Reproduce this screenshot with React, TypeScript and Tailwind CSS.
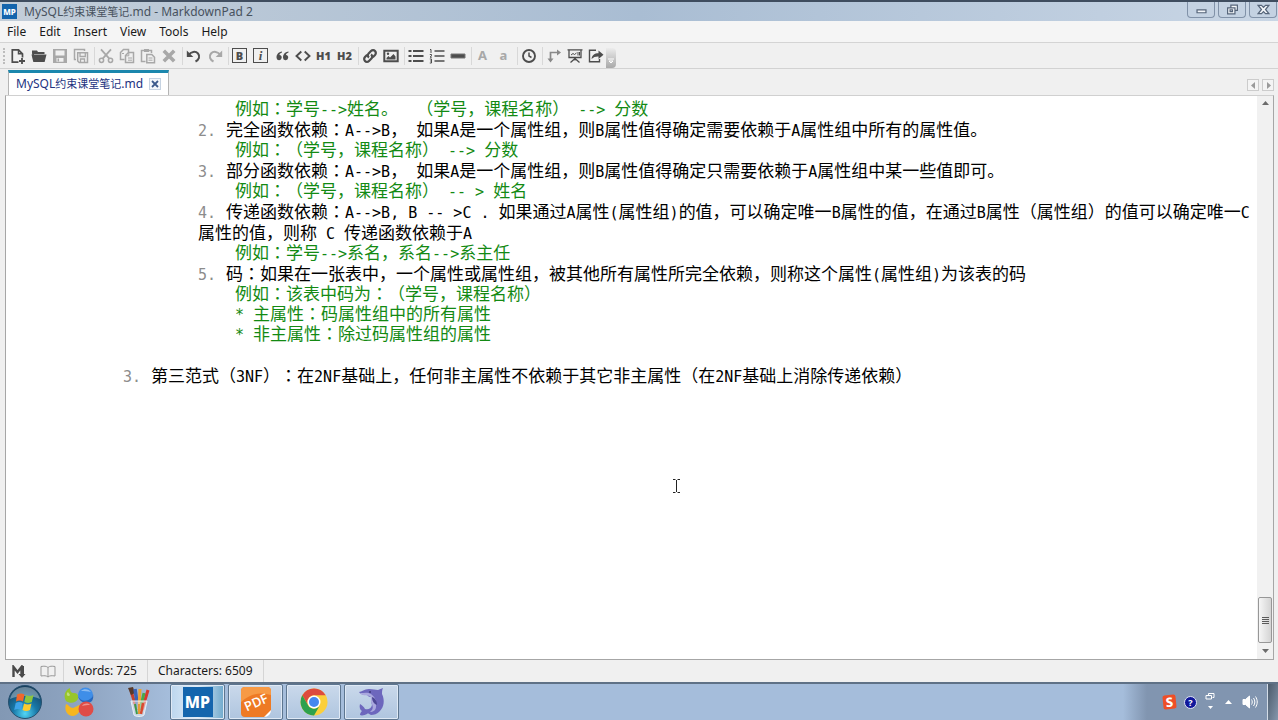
import type { ReactNode } from "react";
import clsx from "clsx";

const DARK = "#4d4d4d";
const DIM = "#a8a8a8";

const Svg = ({ children, size = 16 }: { children: ReactNode; size?: number }) => (
  <svg
    width={size}
    height={size}
    viewBox="0 0 16 16"
    fill="none"
    stroke="currentColor"
    strokeWidth="1.5"
    aria-hidden="true"
  >
    {children}
  </svg>
);

type Tool = { label: string; off?: boolean; icon: ReactNode };

const toolGroups: Tool[][] = [
  [
    {
      label: "New",
      icon: (
        <Svg>
          <path d="M8.5 14.2H2.3V1.8h6.2l4 4v3.7" strokeWidth="1.7" />
          <path d="M8.5 1.8v4h4" />
          <path d="M12 10v6M9 13h6" strokeWidth="1.8" />
        </Svg>
      ),
    },
    {
      label: "Open",
      icon: (
        <Svg>
          <path d="M1 5V2.5h5l1 1.5h6.5V6H3.2L1.8 10z" fill="currentColor" stroke="none" />
          <path d="M.5 6.5h15L13.6 14H2.3z" fill="currentColor" stroke="none" />
        </Svg>
      ),
    },
    {
      label: "Save",
      off: true,
      icon: (
        <Svg>
          <path
            d="M1 1h14v14H1zM3.5 2.5v5h9v-5zM4.5 10v3.8h7V10z"
            fill="currentColor"
            fillRule="evenodd"
            stroke="none"
          />
          <path d="M6.3 10.5v3" />
        </Svg>
      ),
    },
    {
      label: "Save All",
      off: true,
      icon: (
        <Svg>
          <path d="M3 11.5H1.5v-10h10V3" />
          <path d="M4.7 4.7h9.8v9.8H6.2l-1.5-1.5z" />
          <path d="M7 5v3.5h5.3V5M7.5 14v-3h4v3" strokeWidth="1.3" />
        </Svg>
      ),
    },
  ],
  [
    {
      label: "Cut",
      off: true,
      icon: (
        <Svg>
          <circle cx="3.5" cy="12.3" r="2.1" />
          <circle cx="12.5" cy="12.3" r="2.1" />
          <path d="M3 1.3l8.3 9.3M13 1.3L4.7 10.6" strokeWidth="1.8" />
        </Svg>
      ),
    },
    {
      label: "Copy",
      off: true,
      icon: (
        <Svg>
          <path d="M5.5 11.5h-4v-7l3-3h5v2.5" />
          <path d="M6.5 14.5v-7l3-3h5v10z" />
          <path d="M9.8 4.5v3.3H6.5M9 10h4M9 12.2h4M3 5.5h2" strokeWidth="1" />
        </Svg>
      ),
    },
    {
      label: "Paste",
      off: true,
      icon: (
        <Svg>
          <path d="M5.5 13.5h-4v-11h10V5" />
          <path d="M4 2.5h5" strokeWidth="3" />
          <path d="M6.8 14.8V6.5h5l2.7 2.7v5.6z" />
          <path d="M8.5 10h4M8.5 12.2h4" strokeWidth="1" />
        </Svg>
      ),
    },
    {
      label: "Delete",
      off: true,
      icon: (
        <Svg>
          <path d="M2.8 2.8l10.4 10.4M13.2 2.8L2.8 13.2" strokeWidth="3.6" />
        </Svg>
      ),
    },
  ],
  [
    {
      label: "Undo",
      icon: (
        <Svg>
          <path d="M2.5 7C5 3.5 9.5 2.8 12 5.5c2.4 2.8 1 6.3-2.5 8" strokeWidth="2" />
          <path d="M.8 2.5V9h6.5z" fill="currentColor" stroke="none" />
        </Svg>
      ),
    },
    {
      label: "Redo",
      off: true,
      icon: (
        <Svg>
          <path d="M13.5 7C11 3.5 6.5 2.8 4 5.5c-2.4 2.8-1 6.3 2.5 8" strokeWidth="2" />
          <path d="M15.2 2.5V9H8.7z" fill="currentColor" stroke="none" />
        </Svg>
      ),
    },
  ],
  [
    {
      label: "Bold",
      icon: (
        <span className="flex size-[15px] items-center justify-center border border-[#4d4d4d] text-[11px] leading-none font-black">
          B
        </span>
      ),
    },
    {
      label: "Italic",
      icon: (
        <span className="flex size-[15px] items-center justify-center border border-[#4d4d4d] font-['Liberation_Serif',serif] text-[13px] leading-none font-bold italic">
          i
        </span>
      ),
    },
    {
      label: "Quote",
      icon: (
        <Svg>
          <path
            d="M8 3.500C5.500 3.800 2.500 5.500 2.500 9.500a2.600 2.600 0 1 0 3-2.500C5.600 5.700 6.500 4.900 8 4.500zM14.500 3.500c-2.500.3-5.500 2-5.500 6a2.600 2.600 0 1 0 3-2.500c.1-1.300 1-2.100 2.500-2.500z"
            fill="currentColor"
            stroke="none"
          />
        </Svg>
      ),
    },
    {
      label: "Code",
      icon: (
        <Svg>
          <path d="M6.3 3.5L1.5 8l4.8 4.500M9.700 3.500L14.500 8l-4.800 4.500" strokeWidth="1.9" />
        </Svg>
      ),
    },
    { label: "Heading 1", icon: <span className="text-[11px] leading-none font-black">H1</span> },
    { label: "Heading 2", icon: <span className="text-[11px] leading-none font-black">H2</span> },
  ],
  [
    {
      label: "Hyperlink",
      icon: (
        <Svg>
          <path
            d="M7 9.500c-1.500-1-1.500-2.800-.4-4L9 3c1.200-1.200 3-1.200 4 0s1 2.800 0 4l-2.200 2.200M9 6.500c1.500 1 1.500 2.800.4 4L7 13c-1.200 1.200-3 1.200-4 0s-1-2.800 0-4l2.200-2.200"
            strokeWidth="2.2"
          />
        </Svg>
      ),
    },
    {
      label: "Image",
      icon: (
        <Svg>
          <path d="M1.3 2.8h13.4v10.4H1.3z" strokeWidth="2" />
          <path d="M3.5 11.5V10l2-2L7 9.500 10.500 6l2 2.500v3z" fill="currentColor" stroke="none" />
          <circle cx="5" cy="5.8" r="1.2" fill="currentColor" stroke="none" />
        </Svg>
      ),
    },
  ],
  [
    {
      label: "Bulleted List",
      icon: (
        <Svg>
          <path d="M.5 3h3M.5 8h3M.5 13h3M5 3h10.500M5 8h10.500M5 13h10.500" strokeWidth="2.2" />
        </Svg>
      ),
    },
    {
      label: "Numbered List",
      icon: (
        <Svg>
          <path d="M5.5 3h10M5.5 8h10M5.5 13h10" />
          <path d="M1 1.500h1V5M.8 6.500h1.700v1.300L1 9.200h1.800M.8 11h1.700v4H.8M1.200 13h1.300" strokeWidth="1" />
        </Svg>
      ),
    },
    {
      label: "Horizontal Rule",
      icon: (
        <Svg>
          <path d="M1 6h14v4H1z" fill="currentColor" stroke="#777777" strokeWidth="1" />
        </Svg>
      ),
    },
  ],
  [
    { label: "Uppercase", off: true, icon: <span className="text-[13px] leading-none font-bold">A</span> },
    { label: "Lowercase", off: true, icon: <span className="text-[13px] leading-none font-bold">a</span> },
  ],
  [
    {
      label: "Timestamp",
      icon: (
        <Svg>
          <circle cx="8" cy="8" r="6" strokeWidth="1.9" />
          <path d="M8 4.5V8l2.500 1.500" />
        </Svg>
      ),
    },
  ],
  [
    {
      label: "Sync Scrolling",
      icon: (
        <Svg>
          <path d="M4.5 11V4.500h7" stroke="#888888" strokeWidth="1.7" />
          <path d="M1.5 10.500h6l-3 4zM11 1.500v6l4-3z" fill="#888888" stroke="none" />
        </Svg>
      ),
    },
    {
      label: "Preview",
      icon: (
        <Svg>
          <path d="M.5 1.800h15M2 2v7.500h12V2M8 9.500v3M8 10.500l-4.500 4M8 10.500l4.500 4" strokeWidth="1.3" />
          <path d="M4 7l2-1.500 1.500 1L9.500 5M11 4v3.500M12.500 4v3.500" strokeWidth="1" />
        </Svg>
      ),
    },
    {
      label: "Export",
      icon: (
        <Svg>
          <path d="M8 2.300H1.500v11.400h10V11" strokeWidth="1.4" />
          <path
            d="M3.500 11c.5-4 3-5.800 7-5.800V2.500l5 4.300-5 4.200V8.400c-3-.1-5 .6-7 2.600z"
            fill="currentColor"
            stroke="none"
          />
        </Svg>
      ),
    },
  ],
];

type Line = { kind: "item" | "example" | "blank"; num?: string; outer?: boolean; text?: string };

const lines: Line[] = [
  { kind: "example", text: "例如：学号-->姓名。  （学号，课程名称） --> 分数" },
  { kind: "item", num: "2.", text: "完全函数依赖：A-->B， 如果A是一个属性组，则B属性值得确定需要依赖于A属性组中所有的属性值。" },
  { kind: "example", text: "例如：（学号，课程名称） --> 分数" },
  { kind: "item", num: "3.", text: "部分函数依赖：A-->B， 如果A是一个属性组，则B属性值得确定只需要依赖于A属性组中某一些值即可。" },
  { kind: "example", text: "例如：（学号，课程名称） -- > 姓名" },
  {
    kind: "item",
    num: "4.",
    text: "传递函数依赖：A-->B, B -- >C . 如果通过A属性(属性组)的值，可以确定唯一B属性的值，在通过B属性（属性组）的值可以确定唯一C属性的值，则称 C 传递函数依赖于A",
  },
  { kind: "example", text: "例如：学号-->系名，系名-->系主任" },
  { kind: "item", num: "5.", text: "码：如果在一张表中，一个属性或属性组，被其他所有属性所完全依赖，则称这个属性(属性组)为该表的码" },
  { kind: "example", text: "例如：该表中码为：（学号，课程名称）" },
  { kind: "example", text: "* 主属性：码属性组中的所有属性" },
  { kind: "example", text: "* 非主属性：除过码属性组的属性" },
  { kind: "blank" },
  { kind: "item", num: "3.", outer: true, text: "第三范式（3NF）：在2NF基础上，任何非主属性不依赖于其它非主属性（在2NF基础上消除传递依赖）" },
];

const Latin = ({ children }: { children: ReactNode }) => (
  <span className="font-['DejaVu_Sans_Mono',monospace] text-[15px] leading-none">{children}</span>
);

// Latin runs are set in the code font, the wide colon in the face that centres it
const Mixed = ({ text }: { text: string }) => (
  <>
    {text.split(/([\x20-\x7e]+|：)/).map((part, i) => {
      if (part === "：") {
        return (
          <span key={i} className="font-['Liberation_Mono','Noto_Sans_CJK_JP',sans-serif]">
            {part}
          </span>
        );
      }
      return i % 2 ? <Latin key={i}>{part}</Latin> : part;
    })}
  </>
);

const EditorLine = ({ line }: { line: Line }) => {
  if (line.kind === "blank") return <p className="h-[21px]" />;
  if (line.kind === "example") {
    return (
      <p className="pl-[229px] leading-5 text-[#138a13]">
        <Mixed text={line.text!} />
      </p>
    );
  }
  return (
    <p className={clsx("leading-[21px] text-black", line.outer ? "pl-[117px]" : "pl-48")}>
      <span className="inline-block w-7 text-[#8c8c8c]">
        <Latin>{line.num}</Latin>
      </span>
      <Mixed text={line.text!} />
    </p>
  );
};

const FileName = () => (
  <>
    MySQL<span className="text-[11px]">约束课堂笔记</span>.md
  </>
);

const MpLogo = ({ className }: { className: string }) => (
  <span className={clsx("flex items-center justify-center bg-[#1465ad] font-extrabold text-white", className)}>
    MP
  </span>
);

const TitleBar = () => (
  <header className="flex h-[21px] items-center border-t-2 border-[#3f4d5f] bg-linear-to-r from-[#c3ced9] via-[#a9bdd3] to-[#c9d6e5] pl-0.5">
    <MpLogo className="h-[15px] w-[15px] text-[8px] leading-none" />
    <h1 className="ml-[7px] text-[12px] leading-4 text-[#48525e]">
      <FileName /> - MarkdownPad 2
    </h1>
    <div className="ml-auto flex gap-[3px] self-start pr-px text-[#56657a]">
      {[
        { label: "Minimize", d: "M2.5 8.500h11v3.500h-11z" },
        { label: "Restore", d: "M6 5.500V2.500h8v6.500h-3M2 6h9v7.500H2zM5 8.500h3v2H5z" },
        { label: "Close", d: "M1.5 3h4L8 5.500 10.500 3h4l-4 5 4 5h-4L8 10.500 5.500 13h-4l4-5z" },
      ].map((b) => (
        <button
          key={b.label}
          aria-label={b.label}
          className="flex h-4 w-7 items-center justify-center rounded-b-sm border border-t-0 border-[#8192a8] bg-[#c4d2e2]"
        >
          <svg width="13" height="13" viewBox="0 0 16 16" fill="#f4f7fa" stroke="currentColor" strokeWidth="1.5">
            <path d={b.d} />
          </svg>
        </button>
      ))}
    </div>
  </header>
);

const MenuBar = () => (
  <nav className="flex h-[22px] items-center gap-[13px] border-b border-[#d4d4d4] bg-[#f5f5f5] pl-[7px]">
    {["File", "Edit", "Insert", "View", "Tools", "Help"].map((m) => (
      <button key={m} className="text-[12px] leading-4 text-[#1a1a1a]">
        {m}
      </button>
    ))}
  </nav>
);

const Toolbar = () => (
  <div role="toolbar" className="flex h-[26px] items-center border-b border-[#d2d2d2] bg-[#f0f0f0] pl-[3px]">
    <span className="h-4 w-1 border-l-2 border-dotted border-[#bdbdbd]" />
    {toolGroups.map((group, g) => (
      <div key={g} className={clsx("flex items-center", g > 0 && "ml-[3px] border-l border-[#d8d8d8]")}>
        {group.map((t) => (
          <button
            key={t.label}
            aria-label={t.label}
            disabled={t.off}
            style={{ color: t.off ? DIM : DARK }}
            className="flex h-[18px] w-[21px] items-center justify-center"
          >
            {t.icon}
          </button>
        ))}
      </div>
    ))}
    <button
      aria-label="Toolbar options"
      className="flex h-5 w-2.5 items-end justify-center self-end rounded-r bg-linear-to-b from-[#ececec] to-[#a9a9a9] pb-1"
    >
      <svg width="8" height="6" viewBox="0 0 8 6" fill="none" stroke="#ffffff">
        <path d="M1 1h6M2 3l2 2 2-2z" />
      </svg>
    </button>
  </div>
);

const TabStrip = () => (
  <div className="flex h-[26px] shrink-0 items-end justify-between bg-[#f0f0f0] pr-1 pl-2">
    <div className="flex h-[25px] items-center gap-[6px] border-x border-t-[3px] border-x-[#b5b5b5] border-t-[#1b87ad] bg-white px-[7px]">
      <span className="text-[12px] leading-4 text-[#23337f]">
        <FileName />
      </span>
      <button
        aria-label="Close tab"
        className="flex size-[12px] items-center justify-center border border-[#c6d3e2] bg-[#f3f7fb]"
      >
        <svg width="8" height="8" viewBox="0 0 8 8" stroke="#3c5a8c" strokeWidth="1.8">
          <path d="M1 1l6 6M7 1L1 7" />
        </svg>
      </button>
    </div>
    <div className="flex gap-[3px] pb-1">
      {[
        { label: "Scroll tabs left", d: "M6 1v7L2 4.500z" },
        { label: "Scroll tabs right", d: "M3 1v7l4-3.500z" },
      ].map((b) => (
        <button
          key={b.label}
          aria-label={b.label}
          className="flex size-3 items-center justify-center border border-[#cccccc] bg-[#f4f4f4]"
        >
          <svg width="9" height="9" viewBox="0 0 9 9" fill="#9a9a9a">
            <path d={b.d} />
          </svg>
        </button>
      ))}
    </div>
  </div>
);

const ScrollBar = () => (
  <div className="flex w-4 shrink-0 flex-col items-center bg-[#f1f1f1]">
    <button aria-label="Scroll up" className="flex h-[14px] items-center">
      <svg width="7" height="4" viewBox="0 0 7 4" fill="#6b6b6b">
        <path d="M0 4l3.500-4L7 4z" />
      </svg>
    </button>
    <div className="mt-auto flex h-[46px] w-[14px] flex-col items-center justify-center gap-px rounded-xs border border-[#979797] bg-linear-to-r from-[#f6f6f6] to-[#d4d4d4]">
      <i className="h-px w-[7px] bg-[#5a5a5a]" />
      <i className="h-px w-[7px] bg-[#5a5a5a]" />
      <i className="h-px w-[7px] bg-[#5a5a5a]" />
      <i className="h-px w-[7px] bg-[#5a5a5a]" />
    </div>
    <button aria-label="Scroll down" className="flex h-4 items-center">
      <svg width="7" height="4" viewBox="0 0 7 4" fill="#6b6b6b">
        <path d="M0 0h7L3.500 4z" />
      </svg>
    </button>
  </div>
);

const Editor = () => (
  <main className="mr-1 ml-[5px] flex flex-1 border border-[#a6a6a6] border-t-[#d0d0d0] bg-white">
    <div
      role="textbox"
      aria-multiline="true"
      aria-label="Markdown source"
      tabIndex={0}
      className="relative flex-1 cursor-text pt-[5px] font-['Liberation_Mono','Noto_Sans_CJK_SC',sans-serif] text-[17px] break-all whitespace-pre-wrap outline-none [text-spacing-trim:space-all]"
    >
      {lines.map((line, i) => (
        <EditorLine key={i} line={line} />
      ))}
      {/* mouse pointer */}
      <svg
        className="absolute top-[382px] left-[666px]"
        width="9"
        height="16"
        viewBox="0 0 9 16"
        stroke="#222222"
        fill="none"
      >
        <path d="M1 1.500h2.500M5.500 1.500H8M4.500 2v12M1 14.500h2.500M5.500 14.500H8" />
      </svg>
    </div>
    <ScrollBar />
  </main>
);

const StatusBar = () => (
  <footer className="flex h-[22px] items-center bg-[#f0f0f0] pl-3 text-[12px] leading-4 text-[#1a1a1a]">
    <svg width="14" height="13" viewBox="0 0 14 13" fill="none" stroke="#4a4a4a" strokeWidth="2.4" aria-hidden="true">
      <path d="M1.500 12V2l4 5 4-5v8" />
      <path d="M6.500 9h7l-3.500 4z" fill="#4a4a4a" stroke="none" />
      <path d="M11 1v9" strokeWidth="2" />
    </svg>
    <svg className="ml-[14px]" width="16" height="13" viewBox="0 0 16 13" fill="none" stroke="#999999" aria-hidden="true">
      <path d="M8 2.500C6.500 1 4 1 1 1.500V11c3-.5 5.500-.5 7 1 1.500-1.500 4-1.500 7-1V1.500C12 1 9.500 1 8 2.500zM8 2.500V12" />
    </svg>
    <span className="ml-[7px] flex h-full items-center border-l border-[#d5d5d5] px-[10px]">Words: 725</span>
    <span className="flex h-full items-center border-x border-[#d5d5d5] px-[10px]">Characters: 6509</span>
  </footer>
);

const StartOrb = () => (
  <svg width="36" height="36" viewBox="0 0 36 36" aria-hidden="true">
    <defs>
      <radialGradient id="orb" cx="50%" cy="85%" r="80%">
        <stop offset="0" stopColor="#52d6f5" />
        <stop offset="0.45" stopColor="#1878a8" />
        <stop offset="1" stopColor="#17405f" />
      </radialGradient>
    </defs>
    <circle cx="18" cy="18" r="16.5" fill="url(#orb)" stroke="#27506e" />
    <path d="M3 15C5 7 11 3 18 3s13 4 15 12c-8-4-22-4-30 0z" fill="#ffffff" opacity="0.35" />
    <path d="M10 10.500c2.500-1.300 5-1.300 7.500 0l-1.500 7c-2.500-1.300-4.500-1.200-7 0z" fill="#f0682c" />
    <path d="M18.800 11c2.500 1.200 5 1.200 7.700 0l-1.700 7c-2.500 1.200-5 1.200-7.500 0z" fill="#8cc63f" />
    <path d="M8.700 19c2.500-1.200 4.700-1.200 7 0l-1.500 7c-2.300-1.200-4.500-1.200-7 0z" fill="#3ea3e8" />
    <path d="M17 19.500c2.500 1.200 5 1.200 7.500 0L23 26c-2.500 1.300-5 1.300-7.500 0z" fill="#fccb2e" />
  </svg>
);

const SwirlIcon = () => (
  <svg width="30" height="30" viewBox="0 0 30 30" aria-hidden="true">
    <path d="M6 1C1 3-1 9 2 14c4 3 10 2 12-2C15 8 13 6 10 6 7 6 6 4 6 1z" fill="#98c62a" />
    <circle cx="21.5" cy="8" r="7.5" fill="#3f8ee8" />
    <path d="M14 9c2 5 8 6 12 3 2-1 3-3 3-5 1 5-1 9-6 9-5 0-8-3-9-7z" fill="#2668bf" />
    <path d="M2 17c3 1 4 4 7 4 3-1 5-3 7-3 1 4-1 10-7 11-6 0-9-6-7-12z" fill="#f6b61e" />
    <circle cx="22" cy="22" r="7.5" fill="#df4c47" />
    <path d="M3 6c1-2 2 0 3 2-1 2-4 1-3-2zM17 4c3-3 8-2 10 1-3-1-7-1-10-1zM18 19c2-3 6-3 8-1-3 0-5 0-8 1z" fill="#ffffff" opacity="0.4" />
  </svg>
);

const PensIcon = () => (
  <svg width="22" height="30" viewBox="0 0 22 30" aria-hidden="true">
    <path d="M3 4l6 19" stroke="#c6402d" strokeWidth="3" />
    <path d="M0 1l5-1 2 6-4 2z" fill="#5a3a2a" />
    <path d="M7 2l3 20" stroke="#3a62b5" strokeWidth="3.5" />
    <path d="M12 2l-1 20" stroke="#eda232" strokeWidth="3" />
    <path d="M20 3l-6 20" stroke="#d8392c" strokeWidth="3" />
    <path d="M16 6l-4 17" stroke="#4ba847" strokeWidth="3" />
    <path d="M3 14h16l-3 14c-2 2-8 2-10 0z" fill="#ffffff" fillOpacity="0.45" stroke="#e9eff5" />
    <path d="M7 17l2 10" stroke="#3f9a4a" strokeWidth="2" />
    <path d="M15 16l-2 11" stroke="#d84a30" strokeWidth="2.5" />
    <path d="M11 17v10" stroke="#e99a35" strokeWidth="2" />
  </svg>
);

const PdfIcon = () => (
  <svg width="30" height="30" viewBox="0 0 30 30" aria-hidden="true">
    <path d="M4 0h22a4 4 0 0 1 4 4v20l-6 6H4a4 4 0 0 1-4-4V4a4 4 0 0 1 4-4z" fill="#ee7a24" />
    <path d="M0 15C10 6 20 5 30 8V4a4 4 0 0 0-4-4H4a4 4 0 0 0-4 4z" fill="#f79a45" />
    <path d="M30 23l-7 7c4 0 7-3 7-7z" fill="#ffffff" />
    <text
      x="15"
      y="20"
      textAnchor="middle"
      transform="rotate(-24 15 15)"
      fill="#ffffff"
      fontFamily="Open Sans, sans-serif"
      fontWeight="600"
      fontSize="13"
    >
      PDF
    </text>
  </svg>
);

const ChromeIcon = () => (
  <svg width="28" height="28" viewBox="0 0 28 28" aria-hidden="true">
    <circle cx="14" cy="14" r="13.5" fill="#fbcf3b" />
    <path d="M2.300 7.300A13.500 13.500 0 0 1 25.700 7.300H14a6.700 6.700 0 0 0-5.800 10z" fill="#dd4b3e" />
    <path d="M2.300 7.300A13.500 13.500 0 0 0 14 27.500l5.800-10.100a6.700 6.700 0 0 1-11.600 0z" fill="#2da14d" />
    <circle cx="14" cy="14" r="6.5" fill="#ffffff" />
    <circle cx="14" cy="14" r="5" fill="#4587ee" />
  </svg>
);

const DolphinIcon = () => (
  <svg width="28" height="30" viewBox="0 0 28 30" aria-hidden="true">
    <path
      d="M1 5c3 0 5-3 10-3 4 0 6 1 9 1l5-2c-1 2-1 4-1 6 3 6 2 13-2 17-3 3-6 4-9 4-2-1-3-2-4-1-2 1-5 2-7 1 0-2 1-3 2-4-2-1-3-4-2-7 2 1 4 3 5 5 3 1 6 0 7-4-1-3-1-5-1-8-2 0-4-1-4-3C6 8 3 8 1 5z"
      fill="#6d67bd"
    />
    <path d="M2 6c4 0 8-1 11 1 4 3 6 7 5 13 0 3-3 5-6 5 4-3 3-6 1-10 0-3 0-5-1-6-4-1-8 0-10-3z" fill="#aaa8de" />
    <path d="M14 10c3 1 5 4 5 8-3-1-5-4-5-8z" fill="#4d4794" />
    <circle cx="12" cy="5" r="0.8" fill="#1d1b4a" />
  </svg>
);

const taskButtons = [
  { label: "MarkdownPad 2", active: true, icon: <MpLogo className="h-[30px] w-[30px] text-[16px] leading-none" /> },
  { label: "PDF reader", icon: <PdfIcon /> },
  { label: "Chrome", icon: <ChromeIcon /> },
  { label: "SQLyog", icon: <DolphinIcon /> },
];

const Taskbar = () => (
  <div className="flex h-[38px] items-stretch border-t-2 border-[#5f7186] bg-[#a5bddb]">
    <div className="flex w-[170px] items-center bg-linear-to-r from-[#8298b4] via-[#8fa5c2] to-[#a5bddb] pl-[7px]">
      <button aria-label="Start">
        <StartOrb />
      </button>
      <button aria-label="Assistant" className="ml-[21px]">
        <SwirlIcon />
      </button>
      <button aria-label="Paint" className="ml-[34px]">
        <PensIcon />
      </button>
    </div>
    <div className="flex gap-[3px]">
      {taskButtons.map((b) => (
        <button
          key={b.label}
          aria-label={b.label}
          className={clsx(
            "flex w-[55px] items-center justify-center rounded-xs border border-[#5d7690] shadow-[inset_0_0_0_1px_#dfe9f5]",
            b.active
              ? "bg-linear-to-r from-[#bcd6ee] via-[#e1edf8] to-[#6fa9cc]"
              : "bg-linear-to-b from-[#cad9eb] to-[#afc5df]"
          )}
        >
          {b.icon}
        </button>
      ))}
    </div>
    <div className="ml-auto flex w-[160px] items-center justify-end gap-2 bg-linear-to-r from-[#a5bddb] from-10% to-[#8195b0] to-25% pr-[9px]">
      <button
        aria-label="Sogou input"
        className="flex h-[14px] w-[13px] -rotate-6 items-center justify-center rounded-xs bg-[#ee4f27] text-[13px] leading-none font-extrabold text-white"
      >
        S
      </button>
      <button
        aria-label="Help"
        className="flex size-[13px] items-center justify-center rounded-full border border-[#e0e4f5] bg-[#10189b] text-[9px] leading-none font-bold text-white"
      >
        ?
      </button>
      <button aria-label="Language options">
        <svg width="10" height="20" viewBox="0 0 10 20" fill="none" stroke="#ffffff">
          <path d="M3.500 3V1.500H9v4H7.500M1 3.500h5.500V7H1z" />
          <path d="M3 14h5l-2.500 3z" fill="#ffffff" stroke="none" />
        </svg>
      </button>
      <button aria-label="Show hidden icons" className="mx-0.5">
        <svg width="7" height="4" viewBox="0 0 7 4" fill="#ffffff">
          <path d="M0 4l3.500-4L7 4z" />
        </svg>
      </button>
      <button aria-label="Volume">
        <svg width="16" height="14" viewBox="0 0 16 14" fill="none" stroke="#ffffff">
          <path d="M1 4.500h2.500L7.500 1v12L3.500 9.500H1z" fill="#ffffff" />
          <path d="M9.500 4.500c1 1.500 1 3.500 0 5M11.500 3c1.800 2.500 1.800 5.500 0 8M13.500 1.500c2.300 3.500 2.300 7.500 0 11" />
        </svg>
      </button>
    </div>
    <button
      aria-label="Show desktop"
      className="w-[11px] border-l border-[#d3dce7] bg-linear-to-br from-[#4c5b6c] to-[#8597ac]"
    />
  </div>
);

export default function App() {
  return (
    <div className="flex min-h-screen flex-col bg-[#f0f0f0] font-['Noto_Sans','Noto_Sans_CJK_SC',sans-serif]">
      <TitleBar />
      <MenuBar />
      <Toolbar />
      <TabStrip />
      <Editor />
      <StatusBar />
      <Taskbar />
    </div>
  );
}
